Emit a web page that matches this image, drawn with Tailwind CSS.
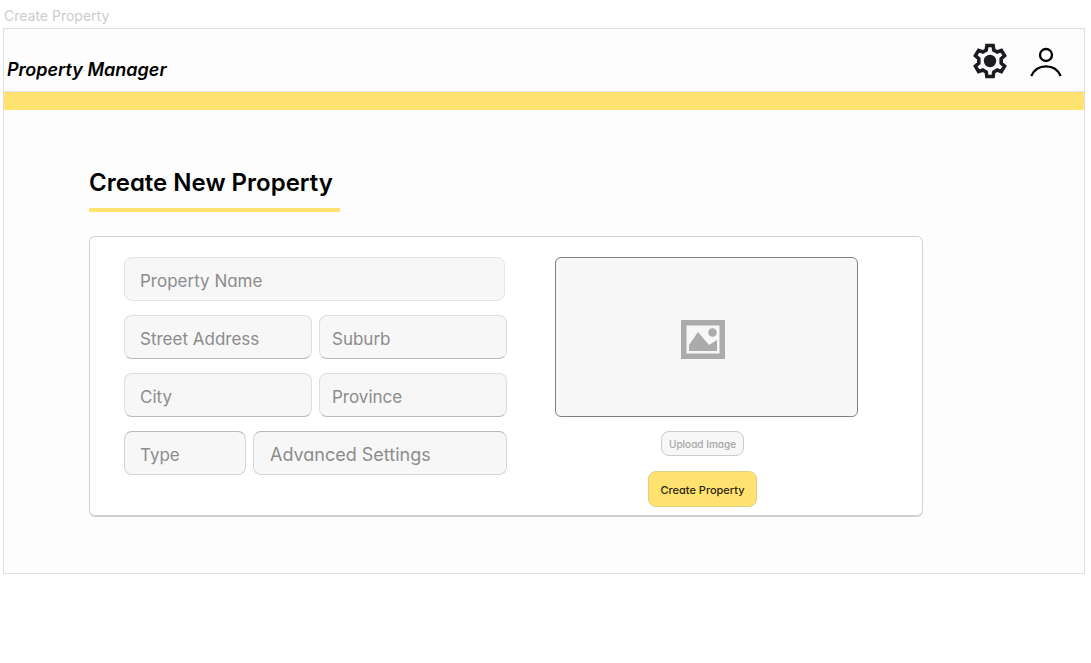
<!DOCTYPE html>
<html lang="en">
<head>
<meta charset="utf-8">
<meta name="viewport" content="width=device-width, initial-scale=1">
<title>Create Property</title>
<script src="https://cdn.jsdelivr.net/npm/@tailwindcss/browser@4"></script>
</head>
<body class="bg-white px-[3px] pr-[6px] pt-[3px] font-['Inter',sans-serif] text-black">
<p class="pl-px text-sm leading-[25px] text-[#cccccc]">Create Property</p>
<div class="border border-[#dedede] bg-[#fdfdfd]">
  <header class="flex h-[63px] items-center justify-between border-b border-[#e0e0e0] pr-[22px] pl-[3px]">
    <span class="pt-5 text-lg font-semibold italic">Property Manager</span>
    <div class="flex items-center gap-[22px] pt-0.5">
      <button type="button" aria-label="Settings" class="block">
        <svg class="size-9" viewBox="0 0 36 36" fill="none" stroke="#1d1b20">
          <path stroke-width="3.6" stroke-linejoin="miter" d="M14.9 2.500H21.1L21.800 7.1L25.2 9L29.4 7.4L32.6 12.6L29.2 15.8V20.2L32.6 23.2L29.4 28.6L25.2 27L21.8 29L21.1 33.500H14.9L14.2 29L10.8 27L6.6 28.6L3.4 23.2L6.8 20.2V15.8L3.4 12.6L6.6 7.4L10.8 9L14.2 7.1Z"/>
          <circle cx="18" cy="18" r="6.2" fill="#1d1b20" stroke="none"/>
        </svg>
      </button>
      <button type="button" aria-label="Account" class="block">
        <svg class="h-9 w-8" viewBox="0 0 32 36" fill="none" stroke="#000" stroke-width="2.300">
          <circle cx="16" cy="12" r="6"/>
          <path d="M1.300 33C7 20.200 25 20.200 30.700 33"/>
        </svg>
      </button>
    </div>
  </header>
  <div class="h-[18px] bg-[#ffe270]"></div>
  <main class="px-[85px] pt-14 pb-14 [font-feature-settings:'cv11']">
    <div class="w-fit border-b-4 border-[#ffe270] pr-[7px] pb-2">
      <h1 class="text-2xl leading-[34px] font-semibold">Create New Property</h1>
    </div>
    <form class="mt-6 flex max-w-[834px] gap-12 rounded-md border border-b-2 border-[#d0d0d0] bg-white pt-5 pr-16 pb-2 pl-[34px]">
      <div class="flex flex-1 flex-col gap-[14px] text-[17px] text-[#8c8c8c]">
        <input aria-label="Property Name" placeholder="Property Name" class="mr-0.5 h-11 rounded-lg border border-[#e4e4e4] bg-[#f7f7f7] px-[15px] pt-1 placeholder:text-[#8c8c8c]">
        <div class="grid grid-cols-2 gap-[7px]">
          <input aria-label="Street Address" placeholder="Street Address" class="h-11 w-full rounded-lg border border-[#dedede] border-b-[#b8b8b8] bg-[#f7f7f7] px-[15px] pt-1 placeholder:text-[#8c8c8c]">
          <input aria-label="Suburb" placeholder="Suburb" class="h-11 w-full rounded-lg border border-[#dedede] border-b-[#b8b8b8] bg-[#f7f7f7] px-3 pt-1 placeholder:text-[#8c8c8c]">
        </div>
        <div class="grid grid-cols-2 gap-[7px]">
          <input aria-label="City" placeholder="City" class="h-11 w-full rounded-lg border border-[#dedede] border-b-[#b8b8b8] bg-[#f7f7f7] px-[15px] pt-1 placeholder:text-[#8c8c8c]">
          <input aria-label="Province" placeholder="Province" class="h-11 w-full rounded-lg border border-[#dedede] border-b-[#b8b8b8] bg-[#f7f7f7] px-3 pt-1 placeholder:text-[#8c8c8c]">
        </div>
        <div class="flex gap-[7px]">
          <input aria-label="Type" placeholder="Type" class="h-11 w-[122px] rounded-lg border border-[#d4d4d4] border-t-[#b8b8b8] bg-[#f7f7f7] px-[15px] pt-1 placeholder:text-[#8c8c8c]">
          <button type="button" class="h-11 flex-1 rounded-lg border border-[#d4d4d4] border-t-[#b8b8b8] bg-[#f7f7f7] px-4 pt-1 text-left text-lg">Advanced Settings</button>
        </div>
      </div>
      <div class="flex w-[303px] flex-col items-center">
        <div class="flex h-40 w-full items-center justify-center rounded-md border border-[#808080] bg-[#f7f7f7]">
          <svg class="mt-1 mr-2 h-[39px] w-11" viewBox="0 0 44 39" role="img" aria-label="Image preview">
            <path fill="#ababab" fill-rule="evenodd" d="M0 0H44V39H0ZM5.500 5.500V33.500H38.500V5.500Z"/>
            <path fill="#ababab" d="M8 31V25L17 12L28 25L36 20V31Z"/>
            <circle cx="31.500" cy="12.500" r="4.300" fill="#ababab"/>
          </svg>
        </div>
        <button type="button" class="mt-[14px] mr-2 h-[25px] rounded-lg border border-[#cccccc] bg-[#f7f7f7] px-[7px] pt-0.5 text-[10px] font-medium text-[#a6a6a6]">Upload Image</button>
        <button type="submit" class="mt-[15px] mr-2 h-9 rounded-lg border border-[#e2cf86] bg-[#ffe270] px-[11px] pt-0.5 text-[11px] font-medium text-[#2b2613]">Create Property</button>
      </div>
    </form>
  </main>
</div>
</body>
</html>
